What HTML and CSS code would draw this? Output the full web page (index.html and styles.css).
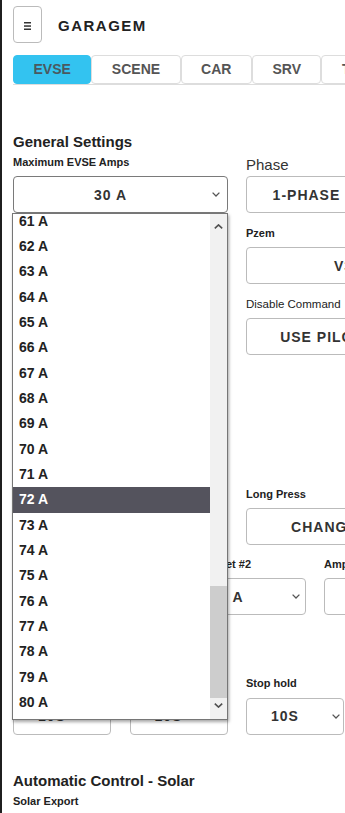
FILE: index.html
```html
<!DOCTYPE html>
<html lang="en">
<head>
    <meta charset="UTF-8">
    <meta name="viewport" content="width=device-width, initial-scale=1.0">
    <title>Garagem - EVSE</title>
    <link rel="stylesheet" href="styles.css">
</head>
<body>
<div class="app">
    <header class="topbar">
        <button class="menu-btn" aria-label="Menu">
            <svg width="7" height="8" viewBox="0 0 7 8"><rect x="0" y="0" width="7" height="1.5" fill="#333"/><rect x="0" y="3.3" width="7" height="1.5" fill="#333"/><rect x="0" y="6.5" width="7" height="1.5" fill="#333"/></svg>
        </button>
        <span class="brand">GARAGEM</span>
    </header>

    <nav class="tabs">
        <a class="tab active">EVSE</a>
        <a class="tab">SCENE</a>
        <a class="tab">CAR</a>
        <a class="tab">SRV</a>
        <a class="tab">TIMER</a>
    </nav>

    <h3 class="section-title">General Settings</h3>
    <div class="grid two">
        <div class="field">
            <label>Maximum EVSE Amps</label>
            <div class="select open"><span>30 A</span><svg class="chev" width="8" height="5" viewBox="0 0 8 5"><polyline points="0.6,0.6 4,4 7.4,0.6" fill="none" stroke="#555" stroke-width="1.3"/></svg></div>
            <!-- open option list of the select -->
            <div class="popup">
                <div class="popup-options">
                    <ul>
                        <li>61 A</li>
                        <li>62 A</li>
                        <li>63 A</li>
                        <li>64 A</li>
                        <li>65 A</li>
                        <li>66 A</li>
                        <li>67 A</li>
                        <li>68 A</li>
                        <li>69 A</li>
                        <li>70 A</li>
                        <li>71 A</li>
                        <li class="active">72 A</li>
                        <li>73 A</li>
                        <li>74 A</li>
                        <li>75 A</li>
                        <li>76 A</li>
                        <li>77 A</li>
                        <li>78 A</li>
                        <li>79 A</li>
                        <li>80 A</li>
                        <li>81 A</li>
                    </ul>
                </div>
                <div class="popup-scroll">
                    <div class="sb-btn up"><svg width="9" height="5" viewBox="0 0 9 5"><polyline points="0.8,4.4 4.5,0.9 8.2,4.4" fill="none" stroke="#505050" stroke-width="1.6"/></svg></div>
                    <div class="sb-track"><div class="sb-thumb"></div></div>
                    <div class="sb-btn down"><svg width="9" height="5" viewBox="0 0 9 5"><polyline points="0.8,0.6 4.5,4.1 8.2,0.6" fill="none" stroke="#505050" stroke-width="1.6"/></svg></div>
                </div>
            </div>
        </div>
        <div class="field">
            <label class="plain">Phase</label>
            <div class="select"><span>1-PHASE (230VAC)</span><svg class="chev" width="8" height="5" viewBox="0 0 8 5"><polyline points="0.6,0.6 4,4 7.4,0.6" fill="none" stroke="#555" stroke-width="1.3"/></svg></div>
        </div>

        <div class="field">
            <label>Minimum EVSE Amps</label>
            <div class="select"><span>6 A</span><svg class="chev" width="8" height="5" viewBox="0 0 8 5"><polyline points="0.6,0.6 4,4 7.4,0.6" fill="none" stroke="#555" stroke-width="1.3"/></svg></div>
        </div>
        <div class="field">
            <label>Pzem</label>
            <div class="select"><span>V3</span><svg class="chev" width="8" height="5" viewBox="0 0 8 5"><polyline points="0.6,0.6 4,4 7.4,0.6" fill="none" stroke="#555" stroke-width="1.3"/></svg></div>
        </div>

        <div class="field">
            <label>Lock Mode</label>
            <div class="select"><span>AUTO</span><svg class="chev" width="8" height="5" viewBox="0 0 8 5"><polyline points="0.6,0.6 4,4 7.4,0.6" fill="none" stroke="#555" stroke-width="1.3"/></svg></div>
        </div>
        <div class="field">
            <label class="light">Disable Command</label>
            <div class="btn">USE PILOT SIGNAL</div>
        </div>

        <div class="field spaced">
            <label>Solar Start Amps</label>
            <div class="select"><span>8 A</span><svg class="chev" width="8" height="5" viewBox="0 0 8 5"><polyline points="0.6,0.6 4,4 7.4,0.6" fill="none" stroke="#555" stroke-width="1.3"/></svg></div>
        </div>
        <div></div>

        <div class="field">
            <label>Short Press</label>
            <div class="btn">START / STOP</div>
        </div>
        <div class="field">
            <label>Long Press</label>
            <div class="btn">CHANGE PHASE</div>
        </div>
    </div>

    <div class="grid three">
        <div class="field">
            <label>Amps Preset #1</label>
            <div class="select"><span>10 A</span><svg class="chev" width="8" height="5" viewBox="0 0 8 5"><polyline points="0.6,0.6 4,4 7.4,0.6" fill="none" stroke="#555" stroke-width="1.3"/></svg></div>
        </div>
        <div class="field">
            <label>Amps Preset #2</label>
            <div class="select"><span>16 A</span><svg class="chev" width="8" height="5" viewBox="0 0 8 5"><polyline points="0.6,0.6 4,4 7.4,0.6" fill="none" stroke="#555" stroke-width="1.3"/></svg></div>
        </div>
        <div class="field">
            <label>Amps Preset #3</label>
            <div class="select"><span>32 A</span><svg class="chev" width="8" height="5" viewBox="0 0 8 5"><polyline points="0.6,0.6 4,4 7.4,0.6" fill="none" stroke="#555" stroke-width="1.3"/></svg></div>
        </div>
    </div>

    <div class="grid four">
        <div class="field">
            <label>Start delay</label>
            <div class="select"><span>10S</span><svg class="chev" width="8" height="5" viewBox="0 0 8 5"><polyline points="0.6,0.6 4,4 7.4,0.6" fill="none" stroke="#555" stroke-width="1.3"/></svg></div>
        </div>
        <div class="field">
            <label>Stop delay</label>
            <div class="select"><span>10S</span><svg class="chev" width="8" height="5" viewBox="0 0 8 5"><polyline points="0.6,0.6 4,4 7.4,0.6" fill="none" stroke="#555" stroke-width="1.3"/></svg></div>
        </div>
        <div class="field">
            <label>Stop hold</label>
            <div class="select"><span>10S</span><svg class="chev" width="8" height="5" viewBox="0 0 8 5"><polyline points="0.6,0.6 4,4 7.4,0.6" fill="none" stroke="#555" stroke-width="1.3"/></svg></div>
        </div>
        <div class="field">
            <label>Start hold</label>
            <div class="select"><span>10S</span><svg class="chev" width="8" height="5" viewBox="0 0 8 5"><polyline points="0.6,0.6 4,4 7.4,0.6" fill="none" stroke="#555" stroke-width="1.3"/></svg></div>
        </div>
    </div>

    <h3 class="section-title">Automatic Control - Solar</h3>
    <div class="grid two">
        <div class="field">
            <label>Solar Export</label>
            <div class="select"><span>OFF</span><svg class="chev" width="8" height="5" viewBox="0 0 8 5"><polyline points="0.6,0.6 4,4 7.4,0.6" fill="none" stroke="#555" stroke-width="1.3"/></svg></div>
        </div>
    </div>
</div>
</body>
</html>
```

FILE: styles.css
```css
html, body {
    margin: 0;
    padding: 0;
    overflow: hidden;
}
body {
    font-family: "Liberation Sans", Arial, sans-serif;
    color: #222;
    background-color: #fff;
}
.app {
    border-left: 2px solid #1f1f1f;
    min-height: 100vh;
    box-sizing: border-box;
    padding: 6px 0 0 11px;
}

/* header */
.topbar {
    display: flex;
    align-items: center;
    gap: 16px;
}
.menu-btn {
    width: 29px;
    height: 37px;
    box-sizing: border-box;
    border: 1px solid #bbb;
    border-radius: 4px;
    background: #fff;
    padding: 2px 0 0;
    display: flex;
    align-items: center;
    justify-content: center;
}
.brand {
    font-size: 15px;
    font-weight: bold;
    letter-spacing: 1.5px;
    padding-top: 2px;
    color: #222;
}

/* tabs */
.tabs {
    display: flex;
    margin: 12px 0 0;
    border-bottom: 1px solid #ddd;
}
.tab {
    flex-shrink: 0;
    height: 29px;
    box-sizing: border-box;
    padding: 0 19.5px;
    border: 1px solid #ddd;
    border-radius: 4px;
    font-size: 14px;
    font-weight: bold;
    line-height: 27px;
    color: #555;
}
.tab.active {
    background-color: #33c3f0;
    border-color: #33c3f0;
    color: #4a5960;
}

/* sections */
.section-title {
    font-size: 15px;
    line-height: 18px;
    font-weight: bold;
    margin: 37px 0 5px;
    color: #222;
}
.tabs + .section-title {
    margin-top: 47.5px;
}
.grid {
    display: grid;
    column-gap: 18px;
    row-gap: 13.5px;
}
.grid.two {
    grid-template-columns: 215px 215px;
}
.grid.three {
    grid-template-columns: repeat(3, 137px);
    column-gap: 18.5px;
    margin-top: 12.5px;
}
.grid.four {
    grid-template-columns: repeat(4, 98px);
    column-gap: 18.5px;
    margin-top: 62px;
}

.field {
    position: relative;
}
.field.spaced {
    margin-top: 48px;
}
.field label {
    display: block;
    font-size: 11px;
    line-height: 13px;
    font-weight: bold;
    margin-bottom: 7.5px;
    white-space: nowrap;
}
.field label.plain {
    font-size: 15px;
    line-height: 17px;
    font-weight: normal;
    margin-bottom: 3.5px;
    color: #333;
}
.field label.light {
    font-size: 11.5px;
    font-weight: normal;
}

.select,
.btn {
    position: relative;
    height: 37px;
    box-sizing: border-box;
    border: 1px solid #bbb;
    border-radius: 4px;
    background: #fff;
    display: flex;
    align-items: center;
    justify-content: center;
    font-size: 14px;
    font-weight: bold;
    letter-spacing: 1px;
    color: #333;
    white-space: nowrap;
}
.select {
    padding: 0 26px 0 6px;
}
.select.open {
    border-color: #7a7a7a;
}
.chev {
    position: absolute;
    right: 3.5%;
    top: 50%;
    margin-top: -2.5px;
}

/* open dropdown list */
.popup {
    position: absolute;
    top: 100%;
    left: -1px;
    width: 216px;
    height: 507px;
    box-sizing: border-box;
    border: 1px solid #767676;
    background: #fff;
    box-shadow: 1px 2px 3px rgba(0, 0, 0, 0.35);
    display: flex;
    z-index: 5;
}
.popup-options {
    flex: 1;
    overflow: hidden;
}
.popup-options ul {
    list-style: none;
    margin: -5.33px 0 0;
    padding: 0;
}
.popup-options li {
    height: 25.33px;
    line-height: 25.33px;
    padding-left: 6px;
    font-size: 14px;
    font-weight: bold;
    color: #222;
}
.popup-options li.active {
    background-color: #54535d;
    color: #fff;
}
.popup-scroll {
    width: 17px;
    background: #f1f1f1;
    display: flex;
    flex-direction: column;
}
.sb-btn {
    display: flex;
    justify-content: center;
    align-items: flex-start;
    box-sizing: border-box;
}
.sb-btn.up {
    height: 20px;
    padding-top: 10px;
}
.sb-btn.down {
    height: 21px;
    padding-top: 5px;
}
.sb-track {
    flex: 1;
}
.sb-thumb {
    margin-top: 352px;
    height: 112px;
    background: #cdcdcd;
}
```
